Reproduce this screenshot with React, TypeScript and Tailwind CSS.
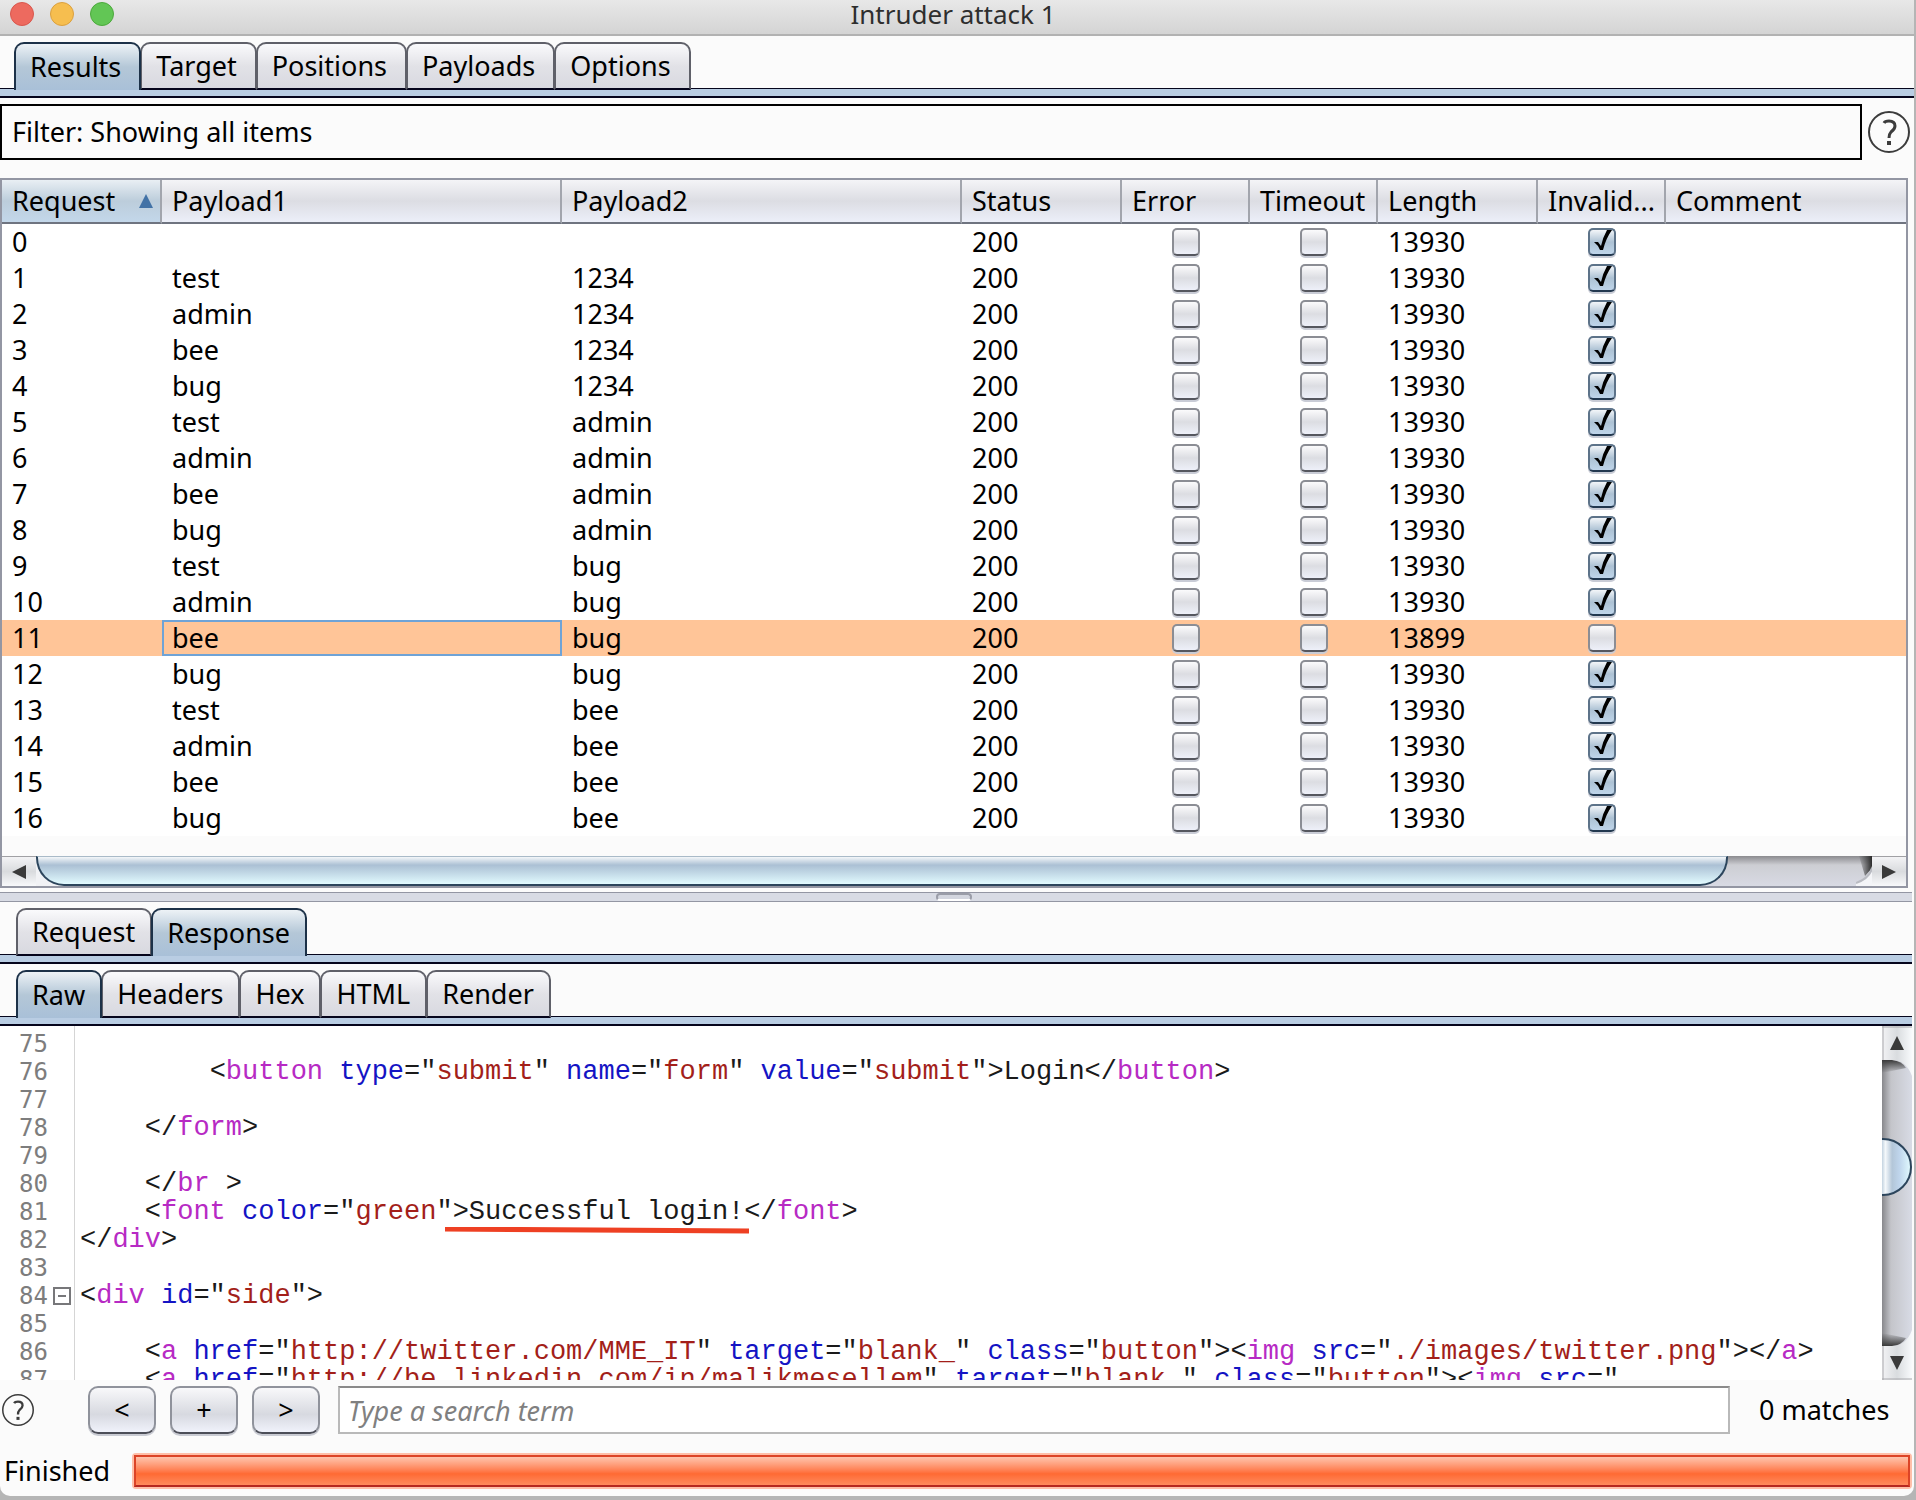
import { useState } from 'react';
import type { ReactNode } from 'react';

const TABS = ['Results', 'Target', 'Positions', 'Payloads', 'Options'];
const MESSAGE_TABS = ['Request', 'Response'];
const VIEW_TABS = ['Raw', 'Headers', 'Hex', 'HTML', 'Render'];

const HEADERS = ['Request', 'Payload1', 'Payload2', 'Status', 'Error', 'Timeout', 'Length', 'Invalid...', 'Comment'];

const USERS = ['test', 'admin', 'bee', 'bug'];
const PASSWORDS = ['1234', 'admin', 'bug', 'bee'];

const ROWS = [
  { id: 0, user: '', password: '', length: 13930, invalid: true },
  ...PASSWORDS.flatMap((password, p) =>
    USERS.map((user, u) => {
      const hit = user === 'bee' && password === 'bug';
      return { id: p * 4 + u + 1, user, password, length: hit ? 13899 : 13930, invalid: !hit };
    }),
  ),
];

const SOURCE: [number, string][] = [
  [75, ''],
  [76, '        <button type="submit" name="form" value="submit">Login</button>'],
  [77, ''],
  [78, '    </form>'],
  [79, ''],
  [80, '    </br >'],
  [81, '    <font color="green">Successful login!</font>'],
  [82, '</div>'],
  [83, ''],
  [84, '<div id="side">'],
  [85, ''],
  [86, '    <a href="http://twitter.com/MME_IT" target="blank_" class="button"><img src="./images/twitter.png"></a>'],
  [87, '    <a href="http://be.linkedin.com/in/malikmesellem" target="blank_" class="button"><img src="'],
];

// Splits one line of markup into coloured tokens
function highlight(line: string): ReactNode[] {
  const parts = line.match(/<\/?|[a-z]+(?==)|="|"|>[^<]*|\s+|[^\s"<>]+/g) ?? [];
  let inString = false;
  let afterOpen = false;
  return parts.map((part, i) => {
    let color = 'text-[#1a1a1a]';
    if (part === '="') {
      inString = true;
    } else if (part === '"') {
      inString = false;
    } else if (inString) {
      color = 'text-[#a31f1a]';
    } else if (afterOpen) {
      color = 'text-[#b72ac4]';
    } else if (/^[a-z]+$/.test(part)) {
      color = 'text-[#1414c4]';
    }
    afterOpen = part === '<' || part === '</';
    if (part === '>Successful login!') {
      return (
        <span key={i} className={`relative ${color}`}>
          {part}
          <svg className="absolute top-full -left-2 h-2 w-[304px]" viewBox="0 0 304 8" preserveAspectRatio="none">
            <path d="M0 2 L304 4" stroke="#ee4023" strokeWidth="5" />
          </svg>
        </span>
      );
    }
    return (
      <span key={i} className={color}>
        {part}
      </span>
    );
  });
}

type TabStripProps = {
  label: string;
  tabs: string[];
  initial: string;
  indent: string;
  tabPadding: string;
};

function TabStrip({ label, tabs, initial, indent, tabPadding }: TabStripProps) {
  const [active, setActive] = useState(initial);
  return (
    <div className="pt-[6px]">
      <div role="tablist" aria-label={label} className={`-mb-[2px] flex h-12 ${indent}`}>
        {tabs.map((tab) => (
          <button
            key={tab}
            role="tab"
            aria-selected={tab === active}
            onClick={() => setActive(tab)}
            className={`relative -mr-px rounded-t-[10px] border-2 text-[27px] leading-9 ${tabPadding} ${
              tab === active
                ? 'z-10 border-[#1c3148] border-b-0 bg-linear-to-b from-[#edf2f6] via-[#b4c7d7] to-[#a9c0d8]'
                : 'border-[#5f6069] border-b-[#05051c] bg-linear-to-b from-[#fafafc] via-[#e2e2e7] to-[#d8d9e0]'
            }`}
          >
            {tab}
          </button>
        ))}
      </div>
      <div className="h-[10px] border-t border-b-2 border-[#05051c] bg-[#b9cde3]" />
    </div>
  );
}

function CheckBox({ label, checked }: { label: string; checked: boolean }) {
  return (
    <span className="relative mx-auto block size-[28px]">
      <input
        type="checkbox"
        aria-label={label}
        checked={checked}
        readOnly
        className="block size-[28px] appearance-none rounded-[5px] border-2 border-[#8b8d94] border-b-[#55575f] bg-linear-to-b from-[#fbfbfc] via-[#dcdde2] to-[#eef0f9] shadow-[0_2px_0_#c9ccd6] checked:border-[#5d7389] checked:border-b-[#22384f] checked:from-[#f3f6f9] checked:via-[#adc2d4] checked:to-[#bfd5ea]"
      />
      {checked && (
        <svg viewBox="0 0 28 28" className="pointer-events-none absolute inset-0 size-[28px]">
          <path d="M6 14 H10 L13 18 Q15 9 19 2 H24 Q18 10 15 22 H12 Q10 17 6 14 Z" fill="#000" />
        </svg>
      )}
    </span>
  );
}

function HelpIcon({ className }: { className: string }) {
  return (
    <button aria-label="Help" className={`shrink-0 ${className}`}>
      <svg viewBox="0 0 42 42" className="size-full" fill="none" stroke="#3c3c3c">
        <circle cx="21" cy="21" r="20" strokeWidth="2" />
        <path d="M16 12 Q17 10 21 10 Q27 10 27 15 Q27 18 23 21 Q21 23 21 27" strokeWidth="3" />
        <path d="M21 30 V34" strokeWidth="4" />
      </svg>
    </button>
  );
}

function ResultsTable() {
  return (
    <div className="mr-[6px] border-2 border-[#9396a3] bg-[#fbfbfb]">
      <table className="w-full table-fixed border-separate border-spacing-0 text-left text-[27px] leading-9">
        <colgroup>
          <col className="w-[160px]" />
          <col className="w-[400px]" />
          <col className="w-[400px]" />
          <col className="w-[160px]" />
          <col className="w-[128px]" />
          <col className="w-[128px]" />
          <col className="w-[160px]" />
          <col className="w-[128px]" />
          <col />
        </colgroup>
        <thead>
          <tr className="h-[44px]">
            {HEADERS.map((header, i) => (
              <th
                key={header}
                aria-sort={i === 0 ? 'ascending' : undefined}
                className={`border-b-2 border-b-[#6f7480] p-0 pl-[10px] font-normal whitespace-nowrap ${
                  i === 0
                    ? 'bg-linear-to-b from-[#e9eff4] via-[#bccddb] to-[#c3d7ea]'
                    : 'bg-linear-to-b from-[#f4f4f7] via-[#dcdde3] to-[#eceff9]'
                } ${i < 8 ? 'border-r-2 border-r-[#a2a5ad]' : ''}`}
              >
                {i === 0 ? (
                  <span className="flex items-center justify-between pr-[7px]">
                    {header}
                    <svg viewBox="0 0 14 14" className="size-[14px]">
                      <path d="M7 0 L14 14 H0 Z" fill="#4272a6" />
                    </svg>
                  </span>
                ) : (
                  header
                )}
              </th>
            ))}
          </tr>
        </thead>
        <tbody>
          {ROWS.map((row) => (
            <tr key={row.id} className={row.id === 11 ? 'h-9 bg-[#ffc598]' : 'h-9 bg-white'}>
              <td className="p-0 pl-[10px]">{row.id}</td>
              <td className={`p-0 pl-[10px] ${row.id === 11 ? 'outline-2 -outline-offset-2 outline-[#6fa3d6]' : ''}`}>
                {row.user}
              </td>
              <td className="p-0 pl-[10px]">{row.password}</td>
              <td className="p-0 pl-[10px]">200</td>
              <td className="p-0">
                <CheckBox label={`Error ${row.id}`} checked={false} />
              </td>
              <td className="p-0">
                <CheckBox label={`Timeout ${row.id}`} checked={false} />
              </td>
              <td className="p-0 pl-[10px]">{row.length}</td>
              <td className="p-0">
                <CheckBox label={`Invalid ${row.id}`} checked={row.invalid} />
              </td>
              <td className="p-0" />
            </tr>
          ))}
        </tbody>
      </table>
      <div className="mt-5 flex h-[30px] bg-linear-to-b from-[#8b8b8f] via-[#cdced3] via-30% to-[#d8dae4]">
        <button
          aria-label="Scroll left"
          className="flex w-[34px] items-center justify-center border-t border-[#a0a0a4] bg-linear-to-b from-[#f3f3f5] via-[#d9dbde] to-[#f8f9fb]"
        >
          <svg viewBox="0 0 14 14" className="size-[14px]">
            <path d="M0 7 L14 0 V14 Z" fill="#3a3a3a" />
          </svg>
        </button>
        <div className="grow bg-[linear-gradient(90deg,#f1f2f5_28px,transparent_28px)] pr-[128px]">
          <div className="h-full rounded-b-[28px] border-x-2 border-t border-b-2 border-[#2c455c] border-t-[#a9bac8] bg-linear-to-b from-[#f4f7f9] via-[#abc0d4] via-30% to-[#e2fbff]" />
        </div>
        <svg viewBox="0 0 16 30" className="h-[30px] w-4 shrink-0">
          <defs>
            <linearGradient id="edge">
              <stop offset="0" stopColor="#3a3a3a" stopOpacity="0.1" />
              <stop offset="1" stopColor="#2a2a2a" />
            </linearGradient>
          </defs>
          <path d="M3 0 H16 V12 L9 20 Z" fill="url(#edge)" />
          <path d="M16 10 Q14 22 0 27 V30 H16 Z" fill="#f4f5f8" />
          <path d="M16 12 Q14 22 0 27" fill="none" stroke="#b9bbc2" strokeWidth="2" />
        </svg>
        <button
          aria-label="Scroll right"
          className="flex w-[34px] items-center justify-center border-t border-[#a0a0a4] bg-linear-to-b from-[#f3f3f5] via-[#d9dbde] to-[#f8f9fb]"
        >
          <svg viewBox="0 0 14 14" className="size-[14px]">
            <path d="M14 7 L0 0 V14 Z" fill="#3a3a3a" />
          </svg>
        </button>
      </div>
    </div>
  );
}

function VerticalScrollBar() {
  return (
    <svg viewBox="0 0 30 354" className="h-[354px] w-[30px] shrink-0">
      <defs>
        <linearGradient id="track">
          <stop offset="0" stopColor="#88888c" />
          <stop offset="0.3" stopColor="#c4c5ca" />
          <stop offset="1" stopColor="#d8dbe5" />
        </linearGradient>
        <linearGradient id="thumb">
          <stop offset="0" stopColor="#c3d3e0" />
          <stop offset="0.12" stopColor="#f4f8fb" />
          <stop offset="0.35" stopColor="#b3c6d8" />
          <stop offset="0.6" stopColor="#bfd5ec" />
          <stop offset="1" stopColor="#e2fbff" />
        </linearGradient>
        <linearGradient id="cap">
          <stop offset="0" stopColor="#f3f3f5" />
          <stop offset="0.5" stopColor="#d9dcdf" />
          <stop offset="1" stopColor="#f8fafc" />
        </linearGradient>
        <linearGradient id="shade" x2="0" y2="1">
          <stop offset="0" stopColor="#3a3a3a" />
          <stop offset="1" stopColor="#3a3a3a" stopOpacity="0" />
        </linearGradient>
        <linearGradient id="shadeUp" x2="0" y1="1" y2="0">
          <stop offset="0" stopColor="#3a3a3a" />
          <stop offset="1" stopColor="#3a3a3a" stopOpacity="0" />
        </linearGradient>
      </defs>
      <rect width="30" height="354" fill="url(#track)" />
      <path d="M0 34 H10 Q20 35 24 42 L0 47 Z" fill="url(#shade)" />
      <path d="M0 320 H10 Q20 319 24 312 L0 307 Z" fill="url(#shadeUp)" />
      <path d="M0 0 H30 V50 Q24 34 10 34 H0 Z" fill="url(#cap)" />
      <path d="M0 354 H30 V304 Q24 320 10 320 H0 Z" fill="url(#cap)" />
      <path d="M1 0 V34 M1 320 V354 M0 1 H30 M0 353 H30" stroke="#a8a8ac" fill="none" />
      <path d="M15 10 L22 24 H8 Z M15 344 L22 330 H8 Z" fill="#3a3a3a" />
      <path d="M0 113 H1 A28 28 0 0 1 1 169 H0 Z" fill="url(#thumb)" />
      <path d="M0 113 H1 A28 28 0 0 1 1 169 H0" fill="none" stroke="#2c455c" strokeWidth="2" />
    </svg>
  );
}

function SourceView() {
  return (
    <div className="mr-[2px] flex h-[354px] bg-white">
      <div className="flex min-w-0 grow overflow-hidden bg-[linear-gradient(90deg,transparent_74px,#d5d5d5_74px,#d5d5d5_75px,transparent_75px)] pt-1 font-['Liberation_Mono',monospace] text-[27px] leading-7 whitespace-pre">
        <div>
          {SOURCE.map(([n, line]) => (
            <div key={n} className="flex h-7">
              <span className="flex w-[75px] shrink-0 items-center pl-[19px] font-['DejaVu_Sans_Mono',monospace] text-[24px] text-[#7d7d7d]">
                {n}
                {n === 84 && (
                  <svg viewBox="0 0 18 18" className="ml-[5px] size-[18px]" fill="none" stroke="#77777a" strokeWidth="2">
                    <path d="M1 1 H17 V17 H1 Z M5 9 H13" />
                  </svg>
                )}
              </span>
              <code className="pl-[5px] font-[inherit]">{highlight(line)}</code>
            </div>
          ))}
        </div>
      </div>
      <VerticalScrollBar />
    </div>
  );
}

const PUSH_BUTTON =
  'h-12 w-[68px] rounded-[10px] border-2 border-[#8f929b] border-b-[#4c4e58] bg-linear-to-b from-[#f8f8fa] via-[#d7d9e0] via-60% to-[#f0f2fb] text-[27px] leading-9 shadow-[0_2px_0_#c9cbd3]';

export default function App() {
  const [query, setQuery] = useState('');

  return (
    <div className="min-h-screen bg-[#b5b5b5] pr-[2px] font-['Noto_Sans',sans-serif] text-black">
      <div className="flex min-h-[1496px] flex-col rounded-b-[10px] bg-[#fbfbfb]">
        <header className="relative flex h-9 items-start justify-center border-b-2 border-[#b2b2b2] bg-linear-to-b from-[#e8e8e8] to-[#d4d4d4]">
          <div className="absolute top-[2px] left-[10px] flex gap-4">
            <button aria-label="Close" className="size-6 rounded-full border border-[#d9574d] bg-[#ed6a5f]" />
            <button aria-label="Minimize" className="size-6 rounded-full border border-[#dba03f] bg-[#f6be4f]" />
            <button aria-label="Zoom" className="size-6 rounded-full border border-[#4ca93c] bg-[#62c655]" />
          </div>
          <h1 className="pr-2 text-[26px] leading-7 text-[#2e2e2e]">Intruder attack 1</h1>
        </header>

        <TabStrip label="Attack" tabs={TABS} initial="Results" indent="pl-[14px]" tabPadding="pl-[14px] pr-[18px]" />

        <div className="mt-[6px] flex items-center gap-[6px] pr-1">
          <button className="h-[56px] grow border-2 border-black pl-[10px] text-left text-[27px] leading-9">
            Filter: Showing all items
          </button>
          <HelpIcon className="size-[42px]" />
        </div>

        <div className="mt-[18px]">
          <ResultsTable />
        </div>

        <div className="mt-1 mr-[2px] flex h-[10px] justify-center border-y border-[#9396a3] bg-[#d8dbe4]">
          <div className="mr-1 h-2 w-9 rounded-[4px] border-2 border-[#9a9da8] border-b-white bg-[#d3d6df]" />
        </div>

        <div className="mr-[2px]">
          <TabStrip
            label="Message"
            tabs={MESSAGE_TABS}
            initial="Response"
            indent="pl-4"
            tabPadding="pl-[14px] pr-[15px]"
          />
          <TabStrip label="View" tabs={VIEW_TABS} initial="Raw" indent="pl-4" tabPadding="pl-[14px] pr-[15px]" />
        </div>

        <SourceView />

        <div className="mt-[6px] flex items-center pl-[2px] text-[27px] leading-9">
          <HelpIcon className="size-8" />
          <div className="ml-[54px] flex gap-[14px]">
            <button aria-label="Previous match" className={PUSH_BUTTON}>&lt;</button>
            <button aria-label="Search options" className={PUSH_BUTTON}>+</button>
            <button aria-label="Next match" className={PUSH_BUTTON}>&gt;</button>
          </div>
          <input
            type="text"
            aria-label="Search term"
            placeholder="Type a search term"
            value={query}
            onChange={(e) => setQuery(e.target.value)}
            className="ml-[18px] h-12 min-w-0 grow border-2 border-[#b9b9b9] border-t-[#8a8a8a] bg-white px-2 outline-none placeholder:text-[#808080] placeholder:italic"
          />
          <span className="w-[184px] shrink-0 pl-[29px]">0 matches</span>
        </div>

        <div className="mt-[19px] mr-[2px] flex items-center text-[27px] leading-9">
          <span className="w-[132px] shrink-0 pl-1">Finished</span>
          <div
            role="progressbar"
            aria-label="Attack progress"
            aria-valuenow={100}
            className="h-9 grow rounded-[4px] border-2 border-[#ffbfa9] bg-[#ffbfa9]"
          >
            <div className="h-8 border-2 border-[#dc4427] border-b-[#b62820] bg-linear-to-b from-[#ffc4ad] via-[#ff6a33] via-60% to-[#ff8a5c]" />
          </div>
        </div>
      </div>
    </div>
  );
}
